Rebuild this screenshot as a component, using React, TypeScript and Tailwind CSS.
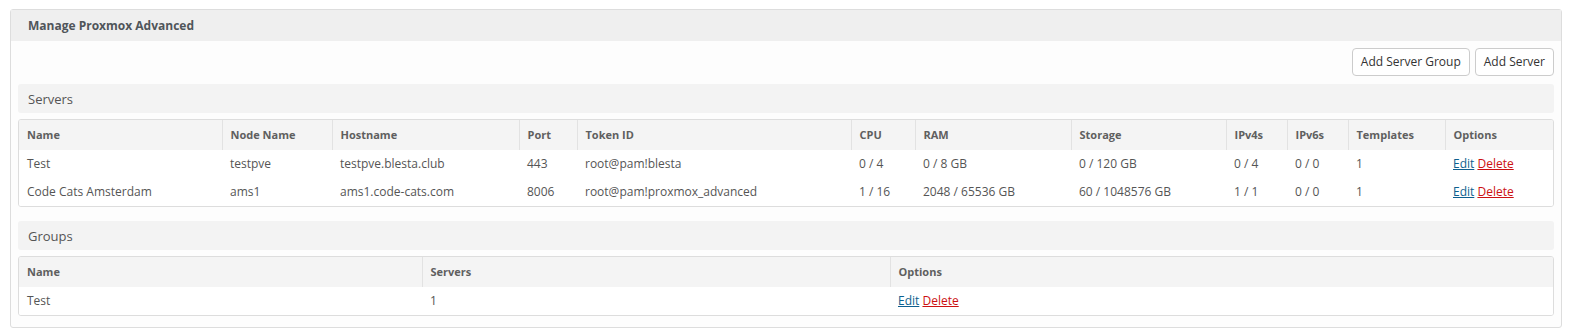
import React from "react";

const serverCols = [
  { label: "Name", w: "w-[203px]" },
  { label: "Node Name", w: "w-[110px]" },
  { label: "Hostname", w: "w-[187px]" },
  { label: "Port", w: "w-[58px]" },
  { label: "Token ID", w: "w-[274px]" },
  { label: "CPU", w: "w-[64px]" },
  { label: "RAM", w: "w-[156px]" },
  { label: "Storage", w: "w-[155px]" },
  { label: "IPv4s", w: "w-[61px]" },
  { label: "IPv6s", w: "w-[61px]" },
  { label: "Templates", w: "w-[97px]" },
  { label: "Options", w: "w-[111px]" },
];

const servers = [
  ["Test", "testpve", "testpve.blesta.club", "443", "root@pam!blesta", "0 / 4", "0 / 8 GB", "0 / 120 GB", "0 / 4", "0 / 0", "1"],
  ["Code Cats Amsterdam", "ams1", "ams1.code-cats.com", "8006", "root@pam!proxmox_advanced", "1 / 16", "2048 / 65536 GB", "60 / 1048576 GB", "1 / 1", "0 / 0", "1"],
];

const groupCols = [
  { label: "Name", w: "w-[403px]" },
  { label: "Servers", w: "w-[468px]" },
  { label: "Options", w: "w-auto" },
];

const groups = [["Test", "1"]];

const Options = () => (
  <span>
    <a href="#" className="text-[#0e5f8f] underline">Edit</a>{" "}
    <a href="#" className="text-[#cc1111] underline">Delete</a>
  </span>
);

const SectionBar = ({ title }: { title: string }) => (
  <div className="flex h-[29px] items-center rounded-[3px] bg-[#f3f3f3] px-[10px] pt-[2px] text-[13px] text-[#555]">
    {title}
  </div>
);

const DataTable = ({ cols, rows }: { cols: { label: string; w: string }[]; rows: string[][] }) => (
  <div className="mt-[6px] overflow-hidden rounded-[3px] border border-[#dddddd]">
    <table className="w-full table-fixed border-collapse">
      <thead>
        <tr className="h-[30px] bg-[#f4f4f4]">
          {cols.map((c, i) => (
            <th
              key={c.label}
              className={`${c.w} px-2 text-left text-[11px] font-bold text-[#5f5f5f] ${i > 0 ? "border-l border-[#e2e2e2]" : ""}`}
            >
              {c.label}
            </th>
          ))}
        </tr>
      </thead>
      <tbody>
        {rows.map((r, ri) => (
          <tr key={ri} className="h-[28px] bg-white">
            {r.map((v, i) => (
              <td key={i} className="px-2 text-[12px] text-[#555]">
                {v}
              </td>
            ))}
            <td className="px-2 text-[12px]">
              <Options />
            </td>
          </tr>
        ))}
      </tbody>
    </table>
  </div>
);

const App = () => {
  return (
    <div className="min-h-[336px] bg-white pt-[9px] pl-[10px] pr-[14px]" style={{ fontFamily: '"Open Sans", "Liberation Sans", sans-serif' }}>
      <div className="rounded-[3px] border border-[#dddddd] bg-[#fdfdfd]">
        <div className="flex h-[31px] items-center bg-[#efefef] px-[17px] text-[12px] font-bold text-[#50555a]">
          Manage Proxmox Advanced
        </div>
        <div className="px-[7px] pt-[7px] pb-[11px]">
          <div className="flex justify-end gap-[5px]">
            <button className="h-[28px] rounded-[4px] border border-[#cccccc] bg-white px-[8px] text-[12px] text-[#333]">
              Add Server Group
            </button>
            <button className="h-[28px] rounded-[4px] border border-[#cccccc] bg-white px-[8px] text-[12px] text-[#333]">
              Add Server
            </button>
          </div>
          <div className="mt-[8px]">
            <SectionBar title="Servers" />
            <DataTable cols={serverCols} rows={servers} />
          </div>
          <div className="mt-[14px]">
            <SectionBar title="Groups" />
            <DataTable cols={groupCols} rows={groups} />
          </div>
        </div>
      </div>
    </div>
  );
};

export default App;
